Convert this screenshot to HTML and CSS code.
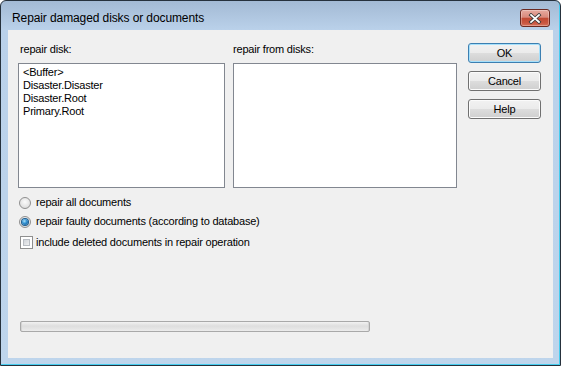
FILE: index.html
```html
<!DOCTYPE html>
<html lang="en">
<head>
  <meta charset="UTF-8">
  <meta name="viewport" content="width=device-width, initial-scale=1.0">
  <title>Repair damaged disks or documents</title>
  <link rel="stylesheet" href="styles.css">
</head>
<body>
  <div class="window">
    <div class="titlebar">
      <span class="title">Repair damaged disks or documents</span>
      <button class="close-btn" aria-label="Close">
        <svg width="14" height="11" viewBox="0 0 14 11">
          <path d="M3 2 L11 9 M11 2 L3 9" stroke="#3a3a3a" stroke-width="3.4" stroke-linecap="square" fill="none"/>
          <path d="M3 2 L11 9 M11 2 L3 9" stroke="#ffffff" stroke-width="1.7" stroke-linecap="square" fill="none"/>
        </svg>
      </button>
    </div>
    <div class="client">
      <div class="top">
        <div class="pane pane-disk">
          <div class="label">repair disk:</div>
          <ul class="listbox">
            <li>&lt;Buffer&gt;</li>
            <li>Disaster.Disaster</li>
            <li>Disaster.Root</li>
            <li>Primary.Root</li>
          </ul>
        </div>
        <div class="pane pane-from">
          <div class="label">repair from disks:</div>
          <ul class="listbox"></ul>
        </div>
        <div class="buttons">
          <button class="btn btn-default">OK</button>
          <button class="btn">Cancel</button>
          <button class="btn">Help</button>
        </div>
      </div>
      <div class="options">
        <div class="option"><span class="radio"></span>repair all documents</div>
        <div class="option"><span class="radio checked"></span>repair faulty documents (according to database)</div>
        <div class="option option-check"><span class="checkbox"></span>include deleted documents in repair operation</div>
      </div>
      <div class="progress"></div>
    </div>
  </div>
</body>
</html>
```

FILE: styles.css
```css
body {
  margin: 0;
  background-color: #fff;
  font-family: 'Liberation Sans', Arial, sans-serif;
  font-size: 11px;
  letter-spacing: -0.2px;
  color: #000;
}

.window {
  width: 561px;
  height: 366px;
  box-sizing: border-box;
  border: 1px solid #26313c;
  border-radius: 6px 6px 0 0;
  background: linear-gradient(#a3bad4, #bad1ea 29px, #bed5ec);
  box-shadow: inset -1px -1px 0 #46cdef;
  padding: 0 7px 7px 7px;
  display: flex;
  flex-direction: column;
}

.titlebar {
  height: 29px;
  box-sizing: border-box;
  padding: 5px 3px 0 4px;
  display: flex;
  align-items: center;
  justify-content: space-between;
}

.title {
  font-size: 12px;
  line-height: 15px;
  letter-spacing: -0.1px;
  color: #000;
}

.close-btn {
  width: 30px;
  height: 18px;
  padding: 0;
  border: 1px solid #6b2a22;
  border-radius: 3px;
  background: linear-gradient(#e7aa9f 0%, #d98a7d 45%, #c14a34 52%, #c95640 80%, #d7725b 100%);
  box-shadow: inset 0 0 0 1px rgba(255, 255, 255, 0.3);
  display: flex;
  align-items: center;
  justify-content: center;
}

.client {
  flex: 1;
  background-color: #f0f0f0;
  padding: 0 12px 0 10px;
}

.top {
  display: flex;
  align-items: flex-start;
}

.pane-disk {
  width: 207px;
}

.pane-disk .label {
  padding-left: 2px;
}

.pane-from {
  width: 224px;
  margin-left: 8px;
}

.label {
  line-height: 13px;
  margin-top: 13px;
  margin-bottom: 7px;
}

.listbox {
  height: 125px;
  box-sizing: border-box;
  margin: 0;
  padding: 2px 4px;
  list-style: none;
  border: 1px solid #828790;
  background-color: #fff;
  line-height: 13px;
}

.buttons {
  margin-left: 11px;
  margin-top: 13px;
  display: flex;
  flex-direction: column;
  gap: 8px;
}

.btn {
  width: 73px;
  height: 20px;
  padding: 0;
  font-family: inherit;
  font-size: 11px;
  letter-spacing: inherit;
  color: #000;
  border: 1px solid #707070;
  border-radius: 3px;
  background: linear-gradient(#f2f2f2 0%, #ebebeb 50%, #dddddd 51%, #cfcfcf 100%);
  box-shadow: inset 0 0 0 1px #fbfbfb;
}

.btn-default {
  border-color: #3c7fb1;
  box-shadow: inset 0 0 0 1px #a6e0fb;
}

.options {
  margin-top: 8px;
  display: flex;
  flex-direction: column;
  gap: 6px;
}

.option {
  height: 13px;
  line-height: 13px;
  display: flex;
  align-items: center;
}

.option-check {
  margin-top: 2px;
}

.radio {
  width: 12px;
  height: 12px;
  box-sizing: border-box;
  margin: 0 5px 0 1px;
  border: 1px solid #8f8f8f;
  border-radius: 50%;
  background: radial-gradient(circle at 50% 40%, #fbfbfb 0%, #e4e4e4 60%, #d0d0d0 100%);
  display: flex;
  align-items: center;
  justify-content: center;
}

.radio.checked::after {
  content: "";
  width: 6px;
  height: 6px;
  border-radius: 50%;
  background: radial-gradient(circle at 40% 35%, #a8e2fb 0%, #2f8ed0 45%, #0d4f86 100%);
  box-shadow: 0 0 0 1px #1d5c8e;
}

.checkbox {
  width: 13px;
  height: 13px;
  box-sizing: border-box;
  margin: 0 3px 0 2px;
  border: 1px solid #8f8f8f;
  background: #fff;
  padding: 2px;
}

.checkbox::after {
  content: "";
  display: block;
  width: 100%;
  height: 100%;
  background: linear-gradient(135deg, #cbcfd5, #f4f4f4);
  box-shadow: inset 0 0 0 1px #b9bdc3;
}

.progress {
  width: 350px;
  height: 11px;
  box-sizing: border-box;
  margin: 72px 0 0 2px;
  border: 1px solid #a9a9a9;
  border-radius: 2px;
  background: linear-gradient(#f2f2f2 0%, #dedede 45%, #e4e4e4 70%, #ececec 100%);
  box-shadow: inset 1px 0 0 #d4d4d4, inset -1px 0 0 #d4d4d4;
}
```
